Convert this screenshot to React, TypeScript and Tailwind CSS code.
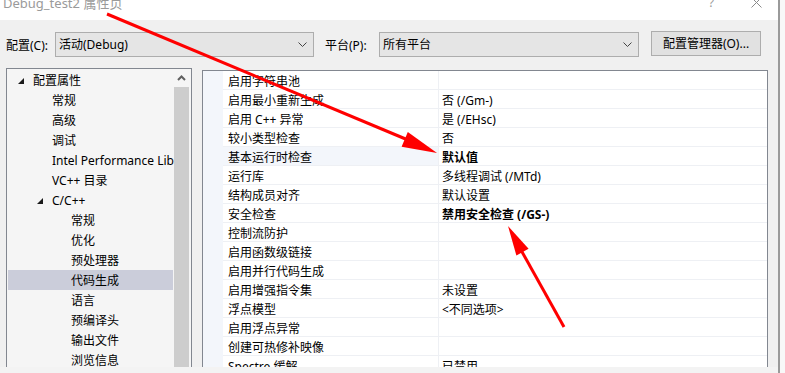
import React from 'react';

type TreeItem = { label: string; level: number; caret?: boolean; selected?: boolean };

const tree: TreeItem[] = [
  { label: '配置属性', level: 0, caret: true },
  { label: '常规', level: 1 },
  { label: '高级', level: 1 },
  { label: '调试', level: 1 },
  { label: 'Intel Performance Libraries', level: 1 },
  { label: 'VC++ 目录', level: 1 },
  { label: 'C/C++', level: 1, caret: true },
  { label: '常规', level: 2 },
  { label: '优化', level: 2 },
  { label: '预处理器', level: 2 },
  { label: '代码生成', level: 2, selected: true },
  { label: '语言', level: 2 },
  { label: '预编译头', level: 2 },
  { label: '输出文件', level: 2 },
  { label: '浏览信息', level: 2 },
];

type Prop = { name: string; value: string; bold?: boolean; hover?: boolean };

const props: Prop[] = [
  { name: '启用字符串池', value: '' },
  { name: '启用最小重新生成', value: '否 (/Gm-)' },
  { name: '启用 C++ 异常', value: '是 (/EHsc)' },
  { name: '较小类型检查', value: '否' },
  { name: '基本运行时检查', value: '默认值', bold: true, hover: true },
  { name: '运行库', value: '多线程调试 (/MTd)' },
  { name: '结构成员对齐', value: '默认设置' },
  { name: '安全检查', value: '禁用安全检查 (/GS-)', bold: true },
  { name: '控制流防护', value: '' },
  { name: '启用函数级链接', value: '' },
  { name: '启用并行代码生成', value: '' },
  { name: '启用增强指令集', value: '未设置' },
  { name: '浮点模型', value: '<不同选项>' },
  { name: '启用浮点异常', value: '' },
  { name: '创建可热修补映像', value: '' },
  { name: 'Spectre 缓解', value: '已禁用' },
];

const padFor = (it: TreeItem) => {
  if (it.level === 0) return it.caret ? 'pl-[10px]' : 'pl-[25px]';
  if (it.level === 1) return it.caret ? 'pl-[29px]' : 'pl-[44px]';
  return 'pl-[63px]';
};

const Chevron = () => (
  <svg width="9" height="5" viewBox="0 0 9 5" className="shrink-0">
    <polyline points="0.5,0.5 4.5,4.5 8.5,0.5" fill="none" stroke="#444" strokeWidth="1" />
  </svg>
);

const Select = ({ text, w }: { text: string; w: string }) => (
  <div className={`${w} h-[25px] bg-[#e5e5e5] border border-[#adadad] flex items-center justify-between pl-[3px] pr-[6px]`}>
    <span className="pt-[1px]">{text}</span>
    <Chevron />
  </div>
);

export default function App() {
  return (
    <div className="relative w-[785px] h-[373px] overflow-hidden bg-[#f0f0f0] text-[12px] text-black font-['Noto_Sans','Noto_Sans_CJK_SC',sans-serif] flex">
      <div className="w-[778px] flex flex-col">
        {/* title bar */}
        <div className="h-[20px] bg-white flex items-start text-[#9a9a9a] text-[13px] leading-[13px]">
          <span className="pl-[3px] -mt-[3px]">Debug_test2 属性页</span>
          <span className="ml-auto -mt-[4px] text-[12px]">?</span>
          <svg width="11" height="11" viewBox="0 0 11 11" className="ml-[37px] mr-[16px] -mt-[3px]">
            <path d="M0.5 0.5 L10.5 10.5 M10.5 0.5 L0.5 10.5" stroke="#8a8a8a" strokeWidth="1" />
          </svg>
        </div>

        {/* config row */}
        <div className="h-[48px] flex items-start pt-[12px]">
          <span className="w-[55px] pl-[6px] leading-[25px] pt-[1px]">配置(C):</span>
          <Select text="活动(Debug)" w="w-[259px]" />
          <span className="ml-[11px] w-[54px] leading-[25px] pt-[1px]">平台(P):</span>
          <Select text="所有平台" w="w-[260px]" />
          <div className="ml-[12px] -mt-[1px] w-[110px] h-[25px] bg-[#e1e1e1] border border-[#adadad] flex items-center justify-center pt-[1px]">
            配置管理器(O)...
          </div>
        </div>

        {/* content */}
        <div className="flex-1 flex items-start pl-[6px]">
          {/* tree */}
          <div className="w-[186px] h-[299px] border border-b-0 border-[#828790] bg-[#f5f5f5] flex">
            <div className="w-[167px] pt-[1px] overflow-hidden">
              {tree.map((it, i) => (
                <div
                  key={i}
                  className={`h-[20px] mx-[1px] flex items-center whitespace-nowrap pt-[2px] ${padFor(it)} ${it.selected ? 'bg-[#cbcdda]' : ''}`}
                >
                  {it.caret && (
                    <svg width="6" height="6" viewBox="0 0 6 6" className="mr-[9px] shrink-0 -mt-[1px]">
                      <polygon points="6,0 6,6 0,6" fill="#1a1a1a" />
                    </svg>
                  )}
                  <span>{it.label}</span>
                </div>
              ))}
            </div>
            <div className="w-[15px] flex flex-col">
              <div className="h-[18px] flex items-center justify-center">
                <svg width="9" height="6" viewBox="0 0 9 6">
                  <polyline points="1,5 4.5,1.5 8,5" fill="none" stroke="#606060" strokeWidth="2" />
                </svg>
              </div>
              <div className="flex-1 bg-[#cdcdcd]" />
            </div>
          </div>

          {/* property grid */}
          <div className="ml-[10px] mt-[2px] w-[566px] h-[297px] border border-b-0 border-[#828790] bg-white flex overflow-hidden">
            <div className="w-[20px] bg-[#f3f6fb]" />
            <div className="flex-1 flex flex-col">
              {props.map((p, i) => (
                <div key={i} className="h-[19px] shrink-0 flex border-b border-[#eef0f4]">
                  <div className={`w-[216px] pl-[5px] pt-[3px] border-r border-[#eef0f4] flex items-center whitespace-nowrap ${p.hover ? 'bg-[#f3f6fb]' : ''}`}>
                    {p.name}
                  </div>
                  <div className={`flex-1 pl-[3px] pt-[3px] flex items-center whitespace-nowrap ${p.bold ? 'font-bold' : ''}`}>
                    {p.value}
                  </div>
                </div>
              ))}
            </div>
          </div>
        </div>

        <div className="h-[6px] bg-[#f3f3f3]" />
      </div>
      <div className="w-[2px] bg-[#9a9a9a]" />
      <div className="flex-1 bg-[#f8f8f8]" />

      {/* annotation arrows */}
      <svg className="absolute inset-0 pointer-events-none" width="785" height="373" viewBox="0 0 785 373">
        <line x1="107" y1="14" x2="408" y2="140" stroke="#ff0000" strokeWidth="3" />
        <polygon points="437,153 401.6,146.8 407.8,132" fill="#ff0000" />
        <line x1="564" y1="327" x2="521" y2="250" stroke="#ff0000" strokeWidth="3" />
        <polygon points="508,226 528.6,248.8 516.4,255.6" fill="#ff0000" />
      </svg>
    </div>
  );
}
